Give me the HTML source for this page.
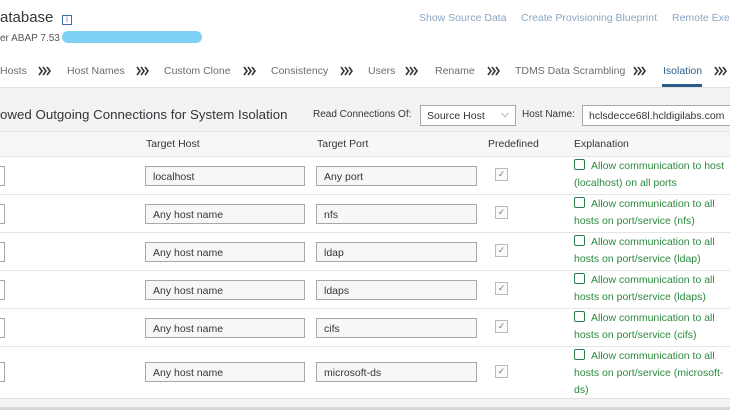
<!DOCTYPE html>
<html><head><meta charset="utf-8"><style>
*{margin:0;padding:0;box-sizing:border-box}
body{width:730px;height:410px;overflow:hidden;background:#fff;font-family:"Liberation Sans",sans-serif;color:#32363a;position:relative}
.a{position:absolute;white-space:nowrap}
.inp{position:absolute;height:20px;border:1px solid #a5a9ad;background:#f7f7f7;font-size:10.5px;padding:4px 7px;color:#32363a}
.cb{position:absolute;width:13px;height:13px;border:1px solid #b8bcc0;background:#fafafa;font-size:9px;color:#777;text-align:center;line-height:11px}
.ex{position:absolute;left:574px;font-size:10.5px;color:#2b8a3e;line-height:17px;width:154px;white-space:normal}
.ex i{display:inline-block;width:11px;height:11px;border:1.5px solid #2b7d4b;border-radius:2px;margin-right:6px;vertical-align:-1px}
.row{position:absolute;left:0;width:730px;border-top:1px solid #e5e5e5}
.stub{position:absolute;left:-4px;width:9px;height:20px;border:1px solid #a5a9ad;background:#fff}
.nav{font-size:10.5px;color:#6a6d70;top:65px}
.ch{position:absolute;top:66px}
</style></head><body>
<svg width="0" height="0" style="position:absolute"><defs><symbol id="c" viewBox="0 0 14 10"><path d="M1 1l3 4-3 4M5 1l3 4-3 4M9 1l3 4-3 4" fill="none" stroke="#32363a" stroke-width="1.6"/></symbol></defs></svg>
<div class="a" style="left:0;top:9px;font-size:15px;color:#32363a">atabase</div>
<div class="a" style="left:62px;top:15px;width:10px;height:10px;border:1px solid #3a6fb0;font-size:8px;line-height:8px;text-align:center;color:#3a6fb0">i</div>
<div class="a" style="left:0;top:33px;font-size:10px;color:#555">er ABAP 7.53</div>
<div class="a" style="left:62px;top:31px;width:140px;height:12px;background:#7fd0f5;border-radius:6px"></div>
<div class="a" style="left:419px;top:12px;font-size:10.5px;color:#8aa6c2">Show Source Data</div>
<div class="a" style="left:521px;top:12px;font-size:10.5px;color:#8aa6c2">Create Provisioning Blueprint</div>
<div class="a" style="left:672px;top:12px;font-size:10.5px;color:#8aa6c2">Remote Exec</div>
<div class="a nav" style="left:0">Hosts</div><svg class="ch" style="left:38px" width="14" height="10"><use href="#c"/></svg>
<div class="a nav" style="left:67px">Host Names</div><svg class="ch" style="left:136px" width="14" height="10"><use href="#c"/></svg>
<div class="a nav" style="left:164px">Custom Clone</div><svg class="ch" style="left:243px" width="14" height="10"><use href="#c"/></svg>
<div class="a nav" style="left:271px">Consistency</div><svg class="ch" style="left:340px" width="14" height="10"><use href="#c"/></svg>
<div class="a nav" style="left:368px">Users</div><svg class="ch" style="left:405px" width="14" height="10"><use href="#c"/></svg>
<div class="a nav" style="left:435px">Rename</div><svg class="ch" style="left:487px" width="14" height="10"><use href="#c"/></svg>
<div class="a nav" style="left:515px">TDMS Data Scrambling</div><svg class="ch" style="left:633px" width="14" height="10"><use href="#c"/></svg>
<div class="a nav" style="left:663px;color:#2a5d8c">Isolation</div><svg class="ch" style="left:714px" width="14" height="10"><use href="#c"/></svg>
<div class="a" style="left:662px;top:84px;width:40px;height:3px;background:#2a5d8c"></div>
<div class="a" style="left:0;top:87px;width:730px;height:44px;background:#f3f3f3;border-top:1px solid #e2e2e2"></div>
<div class="a" style="left:0;top:107px;font-size:13.3px;color:#32363a">owed Outgoing Connections for System Isolation</div>
<div class="a" style="left:313px;top:109px;font-size:10px">Read Connections Of:</div>
<div class="a" style="left:420px;top:105px;width:96px;height:21px;border:1px solid #a5a9ad;background:#fff;font-size:10.5px;padding:4px 6px">Source Host<span style="position:absolute;right:6px;top:2px;color:#666">⌵</span></div>
<div class="a" style="left:522px;top:109px;font-size:10px">Host Name:</div>
<div class="a" style="left:582px;top:105px;width:150px;height:21px;border:1px solid #a5a9ad;background:#fff;font-size:10.5px;padding:4px 6px">hclsdecce68l.hcldigilabs.com</div>
<div class="a" style="left:0;top:131px;width:730px;height:25px;background:#f7f7f7;border-top:1px solid #e5e5e5"></div>
<div class="a" style="left:146px;top:138px;font-size:10.5px">Target Host</div>
<div class="a" style="left:317px;top:138px;font-size:10.5px">Target Port</div>
<div class="a" style="left:488px;top:138px;font-size:10.5px">Predefined</div>
<div class="a" style="left:574px;top:138px;font-size:10.5px">Explanation</div>

<div class="row" style="top:156px"></div>
<div class="stub" style="top:166px"></div><div class="inp" style="left:145px;top:166px;width:160px">localhost</div><div class="inp" style="left:316px;top:166px;width:161px">Any port</div><div class="cb" style="left:495px;top:168px">✓</div>
<div class="ex" style="top:158px"><i></i>Allow communication to host (localhost) on all ports</div>

<div class="row" style="top:194px"></div>
<div class="stub" style="top:204px"></div><div class="inp" style="left:145px;top:204px;width:160px">Any host name</div><div class="inp" style="left:316px;top:204px;width:161px">nfs</div><div class="cb" style="left:495px;top:206px">✓</div>
<div class="ex" style="top:196px"><i></i>Allow communication to all hosts on port/service (nfs)</div>

<div class="row" style="top:232px"></div>
<div class="stub" style="top:242px"></div><div class="inp" style="left:145px;top:242px;width:160px">Any host name</div><div class="inp" style="left:316px;top:242px;width:161px">ldap</div><div class="cb" style="left:495px;top:244px">✓</div>
<div class="ex" style="top:234px"><i></i>Allow communication to all hosts on port/service (ldap)</div>

<div class="row" style="top:270px"></div>
<div class="stub" style="top:280px"></div><div class="inp" style="left:145px;top:280px;width:160px">Any host name</div><div class="inp" style="left:316px;top:280px;width:161px">ldaps</div><div class="cb" style="left:495px;top:282px">✓</div>
<div class="ex" style="top:272px"><i></i>Allow communication to all hosts on port/service (ldaps)</div>

<div class="row" style="top:308px"></div>
<div class="stub" style="top:318px"></div><div class="inp" style="left:145px;top:318px;width:160px">Any host name</div><div class="inp" style="left:316px;top:318px;width:161px">cifs</div><div class="cb" style="left:495px;top:320px">✓</div>
<div class="ex" style="top:310px"><i></i>Allow communication to all hosts on port/service (cifs)</div>

<div class="row" style="top:346px"></div>
<div class="stub" style="top:362px"></div><div class="inp" style="left:145px;top:362px;width:160px">Any host name</div><div class="inp" style="left:316px;top:362px;width:161px">microsoft-ds</div><div class="cb" style="left:495px;top:365px">✓</div>
<div class="ex" style="top:348px"><i></i>Allow communication to all hosts on port/service (microsoft-ds)</div>

<div class="a" style="left:0;top:398px;width:730px;height:12px;background:#f3f3f3;border-top:1px solid #e0e0e0"></div>
<div class="a" style="left:0;top:407px;width:730px;height:3px;background:#d8d8d8"></div>
</body></html>
